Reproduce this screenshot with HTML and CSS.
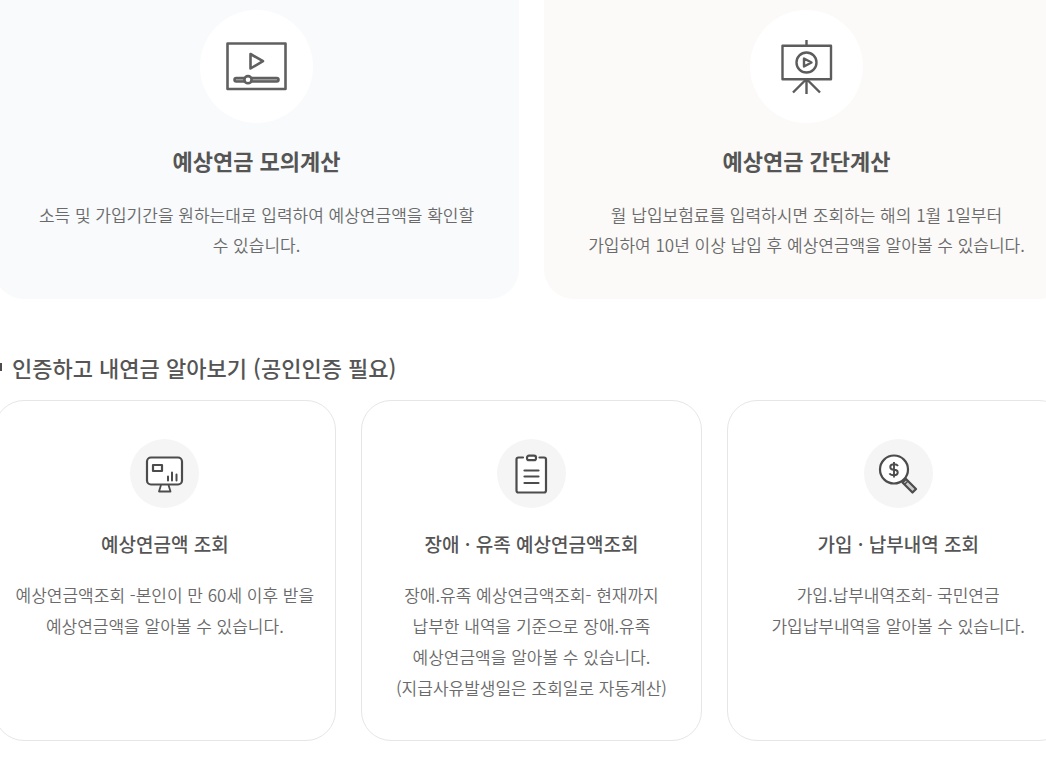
FILE: index.html
```html
<!DOCTYPE html>
<html lang="ko">
<head>
<meta charset="utf-8">
<title>예상연금 알아보기</title>
<link rel="stylesheet" href="styles.css">
</head>
<body>
<main class="content">
  <section class="estimate-list">
    <a class="estimate estimate-blue" href="#simulate">
      <span class="estimate-icon">
        <svg width="62" height="50" viewBox="0 0 62 50" fill="none" stroke="#606060" stroke-width="2.6" stroke-linejoin="round">
          <rect x="1.5" y="1.500" width="58" height="45.500"/>
          <path d="M24.500 12V26.500L37 19.200z"/>
          <rect x="8.500" y="36" width="44" height="3.500" rx="1.700" fill="#b0b0b0"/>
          <circle cx="22" cy="37.700" r="3.600" fill="#fff"/>
        </svg>
      </span>
      <h3 class="estimate-title">예상연금 모의계산</h3>
      <p class="estimate-text">소득 및 가입기간을 원하는대로 입력하여 예상연금액을 확인할 수 있습니다.</p>
    </a>
    <a class="estimate estimate-warm" href="#simple">
      <span class="estimate-icon">
        <svg width="52" height="56" viewBox="0 0 52 56" fill="none" stroke="#5c5c5c" stroke-width="2.4" stroke-linejoin="round">
          <path d="M25.500 1v6M25.500 40v15M24.500 41L12 53.500M26.500 41l12.500 12.500"/>
          <rect x="1.500" y="6.700" width="48.500" height="33.500"/>
          <circle cx="25.500" cy="23.500" r="10"/>
          <path d="M23 19.500v8l7.500-4z"/>
        </svg>
      </span>
      <h3 class="estimate-title">예상연금 간단계산</h3>
      <p class="estimate-text">월 납입보험료를 입력하시면 조회하는 해의 1월 1일부터 가입하여 10년 이상 납입 후 예상연금액을 알아볼 수 있습니다.</p>
    </a>
  </section>

  <h2 class="heading">인증하고 내연금 알아보기 (공인인증 필요)</h2>

  <section class="lookup-list">
    <a class="lookup" href="#pension">
      <span class="lookup-icon">
        <svg width="40" height="40" viewBox="0 0 40 40" fill="none" stroke="#4c4c4c" stroke-width="2.2" stroke-linejoin="round">
          <path d="M16 31l-2 6.500h11.500l-2-6.500" fill="#fff" stroke-width="1.800"/>
          <rect x="2" y="3.500" width="35" height="27" rx="4" fill="#fff"/>
          <rect x="8" y="11" width="9" height="6"/>
          <path d="M23 22.500v4M27 18.500v8M31.500 20.500v6" stroke-linecap="round" stroke-width="2"/>
        </svg>
      </span>
      <h3 class="lookup-title">예상연금액 조회</h3>
      <p class="lookup-text">예상연금액조회 -본인이 만 60세 이후 받을 예상연금액을 알아볼 수 있습니다.</p>
    </a>
    <a class="lookup" href="#disability">
      <span class="lookup-icon">
        <svg width="40" height="40" viewBox="0 0 40 40" fill="none" stroke="#4c4c4c" stroke-width="2.2" stroke-linecap="round" stroke-linejoin="round">
          <rect x="5.500" y="3.500" width="29.500" height="35" rx="2" fill="#fff" stroke="none"/>
          <path d="M12 3.500H7.500q-2 0-2 2v31q0 2 2 2H33q2 0 2-2v-31q0-2-2-2h-4.500"/>
          <rect x="16" y="1.700" width="9" height="4.500" rx="2" fill="#fff"/>
          <path d="M13.500 16.500h14M13.500 22.500h14M13.500 29h14"/>
        </svg>
      </span>
      <h3 class="lookup-title">장애 · 유족 예상연금액조회</h3>
      <p class="lookup-text">장애.유족 예상연금액조회- 현재까지 납부한 내역을 기준으로 장애.유족 예상연금액을 알아볼 수 있습니다.<br>(지급사유발생일은 조회일로 자동계산)</p>
    </a>
    <a class="lookup" href="#history">
      <span class="lookup-icon">
        <svg width="40" height="40" viewBox="0 0 40 40" fill="none" stroke="#4c4c4c" stroke-width="2.200" stroke-linejoin="round">
          <circle cx="16" cy="15.500" r="14" fill="#fff"/>
          <path d="M20 12q-1-1.800-4-1.800c-5 0-5 5.500 0 5.500s5 5.500 0 5.500q-3.500 0-4.500-1.800M16 8v15.500" stroke-width="1.900"/>
          <path d="M24.500 28.500l3.500-3.500L38 35l-3.500 3.500z" fill="#ccc"/>
          <path d="M26.500 30.500l3.500-3.500" stroke-width="1.500"/>
        </svg>
      </span>
      <h3 class="lookup-title">가입 · 납부내역 조회</h3>
      <p class="lookup-text">가입.납부내역조회- 국민연금 가입납부내역을 알아볼 수 있습니다.</p>
    </a>
  </section>
</main>
</body>
</html>
```
FILE: styles.css
```css
* {
  box-sizing: border-box;
}

body {
  margin: 0;
  overflow-x: hidden;
  background: #fff;
  color: #555;
  font-family: "Noto Sans CJK KR", "Noto Sans", sans-serif;
  word-break: keep-all;
}

h2, h3, p {
  margin: 0;
}

a {
  color: inherit;
  text-decoration: none;
}

.content {
  margin: 0 -23px 0 -6px;
  padding-bottom: 16px;
}

.estimate-list {
  display: grid;
  grid-template-columns: repeat(2, 1fr);
  gap: 25px;
}

.estimate {
  display: flex;
  flex-direction: column;
  align-items: center;
  padding: 10px 40px 39px;
  border-radius: 0 0 30px 30px;
  text-align: center;
}

.estimate-blue {
  background: #f8fafc;
}

.estimate-warm {
  background: #fbfaf8;
}

.estimate-icon,
.lookup-icon {
  display: flex;
  align-items: center;
  justify-content: center;
  border-radius: 50%;
}

.estimate-icon {
  width: 113px;
  height: 113px;
  background: #fff;
}

.estimate-title {
  margin-top: 21px;
  font-size: 22px;
  font-weight: 700;
  line-height: 32px;
}

.estimate-text {
  margin-top: 24px;
  color: #6a6a6a;
  font-size: 17px;
  font-weight: 350;
  line-height: 30px;
}

.heading {
  display: flex;
  align-items: center;
  gap: 10px;
  margin: 52px 0 17px;
  font-size: 22px;
  font-weight: 500;
  line-height: 32px;
}

.heading::before {
  content: "";
  width: 8px;
  height: 8px;
  background: #4c4c4c;
}

.lookup-list {
  display: grid;
  grid-template-columns: repeat(3, 1fr);
  gap: 25px;
}

.lookup {
  display: flex;
  flex-direction: column;
  align-items: center;
  padding: 38px 20px 37px;
  border: 1px solid #e6e6e6;
  border-radius: 30px;
  text-align: center;
}

.lookup-icon {
  width: 69px;
  height: 69px;
  background: #f5f5f5;
}

.lookup-title {
  margin-top: 21px;
  font-size: 19px;
  font-weight: 500;
  line-height: 30px;
}

.lookup-text {
  margin-top: 20px;
  color: #6a6a6a;
  font-size: 17px;
  font-weight: 350;
  line-height: 31px;
}
```
